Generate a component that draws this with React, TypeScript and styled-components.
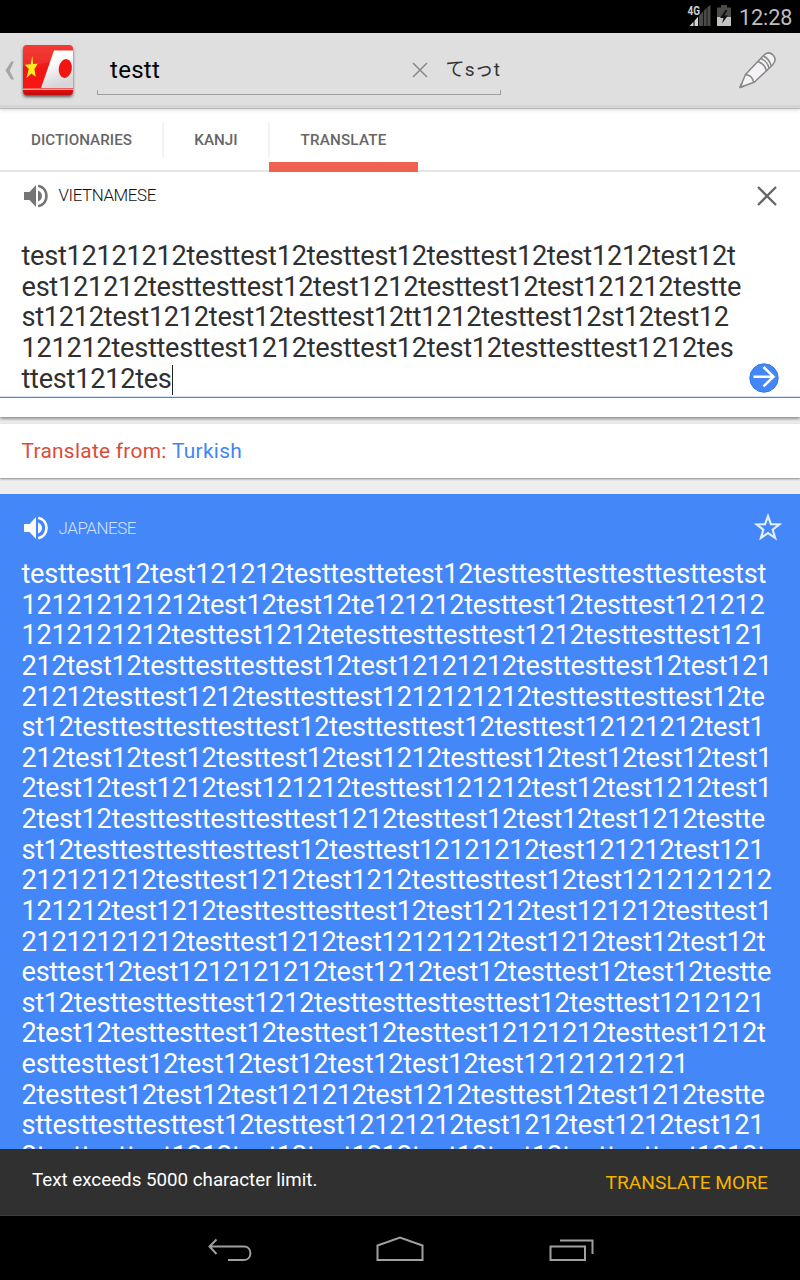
import React from "react";
import styled, { createGlobalStyle } from "styled-components";

const Global = createGlobalStyle`
  * { box-sizing: border-box; }
  body { margin: 0; background: #000; }
`;

const Screen = styled.div`
  width: 800px;
  height: 1280px;
  display: flex;
  flex-direction: column;
  overflow: hidden;
  background: #eee;
  font-family: Roboto, "Noto Sans CJK JP", sans-serif;
`;

const StatusBar = styled.div`
  height: 33px;
  flex: none;
  display: flex;
  align-items: flex-start;
  background: #000;
  color: #bebebe;
  padding-left: 686px;
`;

const Clock = styled.span`
  font-size: 21.6px;
  line-height: 25px;
  padding-top: 5px;
  margin-left: 1px;
  letter-spacing: -0.1px;
`;

const ActionBar = styled.div`
  height: 76px;
  flex: none;
  display: flex;
  background: #dfdfdf;
  border-bottom: 1px solid #b9b9b9;
  box-shadow: inset 0 -3px 0 #d5d5d5, 0 1px 4px rgba(0, 0, 0, 0.16);
  position: relative;
`;

const SearchField = styled.div`
  width: 404px;
  height: 62px;
  margin-left: 16px;
  display: flex;
  align-items: center;
  padding: 12px 1px 0 13px;
  font-size: 24px;
  color: #000;
  background:
    linear-gradient(#a0a0a0, #a0a0a0) 0 100% / 100% 1px no-repeat,
    linear-gradient(#a0a0a0, #a0a0a0) 0 100% / 1px 5px no-repeat,
    linear-gradient(#a0a0a0, #a0a0a0) 100% 100% / 1px 5px no-repeat;
`;

const Query = styled.span`
  flex: 1;
  letter-spacing: 0.3px;
`;

const Kana = styled.span`
  font-size: 19px;
  line-height: 24px;
  margin-top: 0;
  color: #333;
  margin-left: 18px;
  letter-spacing: 0.1px;
  white-space: nowrap;
`;

const Tabs = styled.div`
  height: 63px;
  flex: none;
  display: flex;
  background: #fff;
  border-bottom: 2px solid #e5e5e5;
`;

const Tab = styled.div<{ $width: number; $active?: boolean }>`
  width: ${(p) => p.$width}px;
  height: 63px;
  display: flex;
  align-items: center;
  justify-content: center;
  font-size: 15.2px;
  font-weight: 500;
  letter-spacing: ${(p) => (p.$active ? "0.2px" : "0.05px")};
  color: #666;
  border-bottom: ${(p) => (p.$active ? "10px solid #ef6151" : "none")};
  padding-top: ${(p) => (p.$active ? "9px" : "0")};
  padding-bottom: ${(p) => (p.$active ? "0" : "1px")};
`;

const Divider = styled.div`
  width: 2px;
  height: 34px;
  margin-top: 14px;
  margin-right: -1px;
  margin-left: -1px;
  background: #f4f1f1;
`;

const SourceCard = styled.section`
  height: 245px;
  flex: none;
  background: #fff;
  box-shadow: 0 2px 3px rgba(0, 0, 0, 0.4);
  clip-path: inset(0 0 -8px 0);
`;

const PanelHeader = styled.div<{ $top: number; $right: number }>`
  height: ${(p) => p.$top + 48}px;
  padding: ${(p) => p.$top}px ${(p) => p.$right}px 0 22px;
  display: flex;
  align-items: center;
`;

const LanguageName = styled.span<{ $light?: boolean }>`
  flex: 1;
  margin-left: 7.5px;
  font-size: 16.9px;
  font-weight: 300;
  letter-spacing: -0.4px;
  line-height: 20px;
  padding-bottom: ${(p) => (p.$light ? 0 : 2)}px;
  color: ${(p) => (p.$light ? "#d3e3ff" : "#111")};
`;

const SourceText = styled.div`
  height: 178px;
  padding: 21px 21px 0 21.500px;
  display: flex;
  justify-content: space-between;
  align-items: flex-start;
  border-bottom: 1px solid #4285f4;
  box-shadow: inset 0 -1px 0 #d3e2fb;
`;

const Lines = styled.div<{ $color: string }>`
  color: ${(p) => p.$color};
  font-size: 27.2px;
  letter-spacing: -0.29px;
  line-height: 30.62px;
  white-space: pre;
`;

const Caret = styled.span`
  display: inline-block;
  width: 1px;
  height: 30px;
  margin: 0 -1px 0 0;
  vertical-align: -7px;
  background: #222;
`;

const Suggestion = styled.div`
  height: 54px;
  flex: none;
  margin-top: 7px;
  padding: 0 21.500px 1px;
  display: flex;
  align-items: center;
  background: #fff;
  box-shadow: 0 1px 2px rgba(0, 0, 0, 0.45);
  font-size: 20.9px;
  letter-spacing: 0.27px;
  white-space: pre;
  color: #dd4b39;
`;

const SuggestedLanguage = styled.span`
  color: #4285f4;
`;

const ResultCard = styled.section`
  height: 655px;
  flex: none;
  margin-top: 16px;
  overflow: hidden;
  background: #4387f8;
`;

const ResultText = styled.div`
  padding: 7px 0 0 21.500px;
`;

const Snackbar = styled.div`
  height: 67px;
  flex: none;
  display: flex;
  justify-content: space-between;
  padding: 19px 32px 0;
  background: #303030;
  border-bottom: 1px solid #363d4a;
  color: #fff;
  font-size: 18.75px;
  line-height: 24px;
`;

const Action = styled.span`
  color: #f4b400;
  padding-top: 3px;
  font-size: 19.2px;
`;

const NavBar = styled.nav`
  height: 64px;
  flex: none;
  display: flex;
  justify-content: center;
  background: #000;
`;

const sourceLines = [
  "test12121212testtest12testtest12testtest12test1212test12t",
  "est121212testtesttest12test1212testtest12test121212testte",
  "st1212test1212test12testtest12tt1212testtest12st12test12",
  "121212testtesttest1212testtest12test12testtesttest1212tes",
  "ttest1212tes",
];

const resultLines = [
  "testtestt12test121212testtesttetest12testtesttesttesttesttestst",
  "121212121212test12test12te121212testtest12testtest121212",
  "1212121212testtest1212tetesttesttesttest1212testtesttest121",
  "212test12testtesttesttest12test12121212testtesttest12test121",
  "21212testtest1212testtesttest1212121212testtesttesttest12te",
  "st12testtesttesttesttest12testtesttest12testtest12121212test1",
  "212test12test12testtest12test1212testtest12test12test12test1",
  "2test12test1212test121212testtest121212test12test1212test1",
  "2test12testtesttesttesttest1212testtest12test12test1212testte",
  "st12testtesttesttesttest12testtest12121212test121212test121",
  "212121212testtest1212test1212testtesttest12test1212121212",
  "121212test1212testtesttesttest12test1212test121212testtest1",
  "21212121212testtest1212test12121212test1212test12test12t",
  "esttest12test1212121212test1212test12testtest12test12testte",
  "st12testtesttesttest1212testtesttesttesttest12testtest1212121",
  "2test12testtesttest12testtest12testtest12121212testtest1212t",
  "esttesttest12test12test12test12test12test12121212121",
  "2testtest12test12test121212test1212testtest12test1212testte",
  "sttesttesttesttest12testtest12121212test1212test1212test121",
  "2testtesttest1212test12test1212test12test12testtesttest1212t",
];

const Speaker = ({ color }: { color: string }) => (
  <svg width="29" height="26" viewBox="0 0 29 26">
    <path d="M2 9h5.500L14 2v22l-6.500-7H2z" fill={color} />
    <path d="M16 7.500c5.300 2 5.300 9 0 11z" fill={color} />
    <path d="M16.200 2.700c11 2.500 11 18.100 0 20.600" fill="none" stroke={color} strokeWidth="2.700" />
  </svg>
);

const Cross = ({ size, color, stroke }: { size: number; color: string; stroke: number }) => (
  <svg width={size} height={size} viewBox={`0 0 ${size} ${size}`}>
    <path d={`M1 1L${size - 1} ${size - 1}M${size - 1} 1L1 ${size - 1}`} stroke={color} strokeWidth={stroke} />
  </svg>
);

const StatusIcons = () => (
  <svg width="52" height="33" viewBox="0 0 52 33">
    <text x="1.500" y="14.800" fontSize="12" fontWeight="700" fill="#cfcfcf" textLength="12.500" lengthAdjust="spacingAndGlyphs">4G</text>
    <path d="M3.500 26l4-4.200V26zM8.500 20.800l3.500-4V26H8.500z" fill="#d4d4d4" />
    <path d="M13 16l4-4.500V26h-4zM17.700 11l3-3.200V26h-3zM21.300 7.200L24.500 5v21h-3.200z" fill="#4b4b48" />
    <path d="M31 7.500h4V5h6v2.500h4V17H31z" fill="#4b4b48" />
    <path d="M31 17h14v9H31z" fill="#c4c4c4" />
    <path d="M39.500 10l-5.500 8h3.500l-1.500 5.500 6-8h-3.500l3-5.500z" fill="#111" />
  </svg>
);

const AppIcon = () => (
  <svg width="81" height="75" viewBox="0 0 81 75">
    <defs>
      <linearGradient id="red" x1="0" y1="0" x2="0" y2="1">
        <stop offset="0" stopColor="#f12b25" />
        <stop offset="0.5" stopColor="#ed1713" />
        <stop offset="0.84" stopColor="#fb1412" />
        <stop offset="1" stopColor="#bd0706" />
      </linearGradient>
      <linearGradient id="white" x1="0" y1="0" x2="0.3" y2="1">
        <stop offset="0.35" stopColor="#fff" />
        <stop offset="1" stopColor="#d6d6d9" />
      </linearGradient>
      <filter id="shade" x="-10%" y="-10%" width="120%" height="130%">
        <feDropShadow dx="0" dy="2" stdDeviation="1.500" floodOpacity="0.6" />
      </filter>
    </defs>
    <path d="M14 28.500h-2.800L5.500 37.500l5.700 9H14l-4.300-9z" fill="#a5a5a5" />
    <rect x="23" y="12" width="50" height="50" rx="4" fill="url(#red)" filter="url(#shade)" />
    <path d="M54 17.500h19V55H41z" fill="url(#white)" />
    <path d="M23 55.500h50v1.500H23z" fill="#eaa" />
    <ellipse cx="65.300" cy="35.500" rx="6.500" ry="9.500" fill="#f01712" transform="rotate(10 65.300 35.500)" />
    <path d="M32.300 22.800l-1.700 8.400-5.800.6 4 4.200-2.400 9.200 5-4.800 4.300 3.400-1.300-7.800 3.300-5.200-4.600.2z" fill="#ffef16" />
    <path d="M73 22V14q0-2-3-2H27q-3 0-4 3v17q25 0 50-10" fill="#fff" opacity="0.08" />
  </svg>
);

const PencilSlot = styled.div`
  margin-left: auto;
  padding: 17px 22px 0 0;
`;

const Pencil = () => (
  <svg width="40" height="42" viewBox="0 0 40 42" fill="none" stroke="#868686" strokeWidth="1.500" strokeLinejoin="round">
    <path d="M2 37.500L7.500 24.500 25.500 5.500q5-5 9.500-.5 4.500 4.700-.5 10L16.500 32z" fill="#f5f2f5" />
    <path d="M7.500 24.500q7 .5 8 8M20 11.500q7 2.500 8.500 9.500M23 8.500q6.500 3 8 9.500M25.500 6q6 3 7.500 9.500M2 37.500l2-4.500M2 37.500l4-1.500" />
  </svg>
);

const SendArrow = () => (
  <svg width="30" height="30" viewBox="0 0 30 30">
    <circle cx="15" cy="15" r="14.200" fill="#4387f8" stroke="#3477e4" />
    <path d="M4.500 13.700H24M14.500 4l10 9.700-10 9.700" fill="none" stroke="#fff" strokeWidth="2.500" />
  </svg>
);

const SendSlot = styled.div`
  height: 30px;
  align-self: flex-end;
  margin-bottom: 4px;
`;

const Star = () => (
  <svg width="28" height="31" viewBox="0 0 28 31">
    <path d="M14 3.200l2.900 8 8.500.3-6.700 5.200 2.400 8.200-7.100-4.800-7.100 4.800 2.400-8.200-6.700-5.200 8.500-.3z" fill="none" stroke="#e2edff" strokeWidth="2.200" />
  </svg>
);

const NavIcons = () => (
  <svg width="400" height="64" viewBox="200 0 400 64" fill="none" stroke="#a0a0a0" strokeWidth="2">
    <path d="M216.500 23.500l-7 7 7 7.500M209 30.500h35c8.500 0 8.500 13.500 0 13.500h-16" />
    <path d="M377.500 44V29.500L400 21.500l22.500 8V44z" />
    <path d="M550.500 30.500h34.500V44h-34.500zM560 24.500h32.500V38" />
  </svg>
);

export default function App() {
  return (
    <Screen>
      <Global />
      <StatusBar>
        <StatusIcons />
        <Clock>12:28</Clock>
      </StatusBar>
      <ActionBar>
        <AppIcon />
        <SearchField>
          <Query>testt</Query>
          <Cross size={16} color="#888" stroke={1.5} />
          <Kana>てsっt</Kana>
        </SearchField>
        <PencilSlot><Pencil /></PencilSlot>
      </ActionBar>
      <Tabs>
        <Tab $width={163}>DICTIONARIES</Tab>
        <Divider />
        <Tab $width={106}>KANJI</Tab>
        <Divider />
        <Tab $width={149} $active>TRANSLATE</Tab>
      </Tabs>
      <SourceCard>
        <PanelHeader $top={0} $right={23}>
          <Speaker color="#757575" />
          <LanguageName>VIETNAMESE</LanguageName>
          <Cross size={20} color="#666" stroke={2.3} />
        </PanelHeader>
        <SourceText>
          <Lines $color="#303030">{sourceLines.join("\n")}<Caret /></Lines>
          <SendSlot><SendArrow /></SendSlot>
        </SourceText>
      </SourceCard>
      <Suggestion>Translate from: <SuggestedLanguage>Turkish</SuggestedLanguage></Suggestion>
      <ResultCard>
        <PanelHeader $top={10} $right={18}>
          <Speaker color="#fff" />
          <LanguageName $light>JAPANESE</LanguageName>
          <Star />
        </PanelHeader>
        <ResultText>
          <Lines $color="#fff">{resultLines.join("\n")}</Lines>
        </ResultText>
      </ResultCard>
      <Snackbar>
        <span>Text exceeds 5000 character limit.</span>
        <Action>TRANSLATE MORE</Action>
      </Snackbar>
      <NavBar><NavIcons /></NavBar>
    </Screen>
  );
}
